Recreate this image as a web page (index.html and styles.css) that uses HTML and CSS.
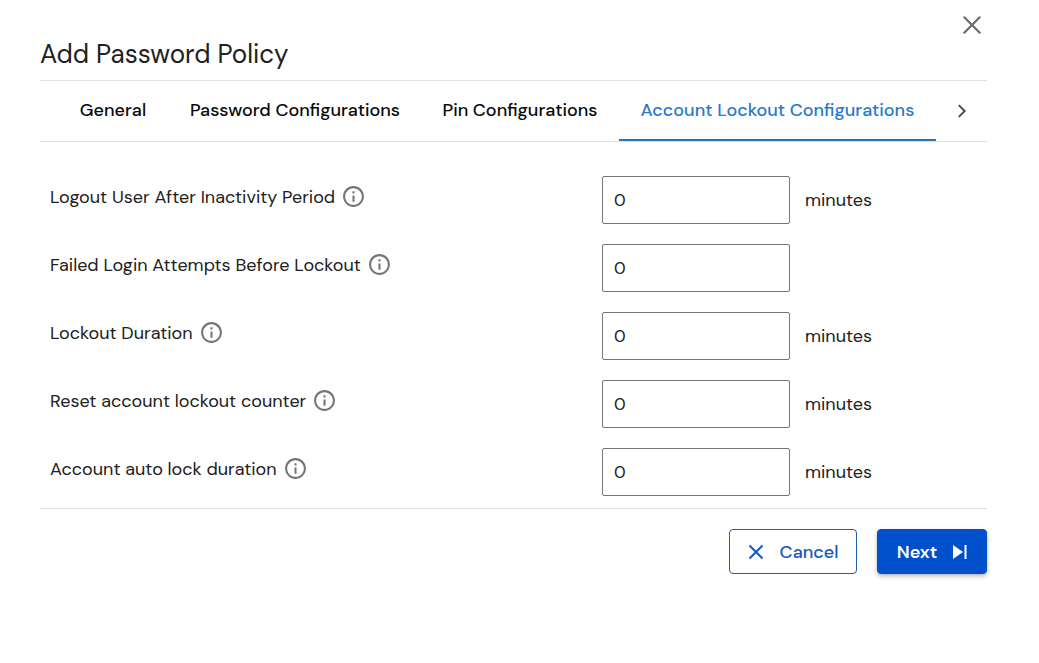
FILE: index.html
```html
<!DOCTYPE html>
<html lang="en">
<head>
<meta charset="utf-8">
<meta name="viewport" content="width=device-width, initial-scale=1">
<title>Add Password Policy</title>
<link rel="stylesheet" href="styles.css">
</head>
<body>
<svg class="sprite" aria-hidden="true">
  <symbol id="info" viewBox="0 0 24 24"><path d="M11 7h2v2h-2zm0 4h2v6h-2zm1-9C6.480 2 2 6.480 2 12s4.480 10 10 10 10-4.480 10-10S17.520 2 12 2zm0 18c-4.410 0-8-3.590-8-8s3.590-8 8-8 8 3.590 8 8-3.590 8-8 8z"/></symbol>
</svg>
<main class="dialog" role="dialog" aria-labelledby="dialog-title">
  <div class="dialog-top">
    <button class="icon-button" type="button" aria-label="Close">
      <svg class="close-icon" viewBox="0 0 20 20"><path d="M3 3l14 14M17 3l-14 14"/></svg>
    </button>
  </div>
  <h1 class="title" id="dialog-title">Add Password Policy</h1>
  <div class="tabs">
    <div class="tab-list" role="tablist">
      <button class="tab" type="button" role="tab">General</button>
      <button class="tab" type="button" role="tab">Password Configurations</button>
      <button class="tab" type="button" role="tab">Pin Configurations</button>
      <button class="tab tab-active" type="button" role="tab" aria-selected="true">Account Lockout Configurations</button>
    </div>
    <button class="icon-button tab-scroll" type="button" aria-label="Next tabs">
      <svg class="chevron" viewBox="0 0 24 24"><path d="M8.500 5.500l6.500 6.500-6.500 6.500"/></svg>
    </button>
  </div>
  <form class="form">
    <div class="row">
      <div class="row-label"><label for="inactivity">Logout User After Inactivity Period</label><svg class="info"><use href="#info"/></svg></div>
      <div class="row-field"><input class="field" id="inactivity" type="text" inputmode="numeric" value="0"><span>minutes</span></div>
    </div>
    <div class="row">
      <div class="row-label"><label for="attempts">Failed Login Attempts Before Lockout</label><svg class="info"><use href="#info"/></svg></div>
      <div class="row-field"><input class="field" id="attempts" type="text" inputmode="numeric" value="0"></div>
    </div>
    <div class="row">
      <div class="row-label"><label for="duration">Lockout Duration</label><svg class="info"><use href="#info"/></svg></div>
      <div class="row-field"><input class="field" id="duration" type="text" inputmode="numeric" value="0"><span>minutes</span></div>
    </div>
    <div class="row">
      <div class="row-label"><label for="reset">Reset account lockout counter</label><svg class="info"><use href="#info"/></svg></div>
      <div class="row-field"><input class="field" id="reset" type="text" inputmode="numeric" value="0"><span>minutes</span></div>
    </div>
    <div class="row">
      <div class="row-label"><label for="autolock">Account auto lock duration</label><svg class="info"><use href="#info"/></svg></div>
      <div class="row-field"><input class="field" id="autolock" type="text" inputmode="numeric" value="0"><span>minutes</span></div>
    </div>
  </form>
  <div class="actions">
    <button class="button button-outline" type="button">
      <svg class="cancel-icon" viewBox="0 0 16 16"><path d="M1.500 1.500l13 13M14.500 1.500l-13 13"/></svg>
      Cancel
    </button>
    <button class="button button-primary" type="button">
      Next
      <svg class="next-icon" viewBox="0 0 14 14"><path d="M0 0l10 7-10 7zM11.500 0h2v14h-2z"/></svg>
    </button>
  </div>
</main>
</body>
</html>
```
FILE: styles.css
```css
* {
  box-sizing: border-box;
}

body {
  margin: 0;
  background: #fff;
  color: #212121;
  font-family: "DM Sans", Inter, "Liberation Sans", sans-serif;
  font-size: 18px;
  line-height: 24px;
}

button,
input {
  font: inherit;
  color: inherit;
}

button {
  cursor: pointer;
}

.sprite {
  display: none;
}

.dialog {
  padding: 12px 52px 24px 40px;
}

.dialog-top {
  display: flex;
  justify-content: flex-end;
}

.icon-button {
  display: flex;
  align-items: center;
  justify-content: center;
  padding: 0;
  border: 0;
  background: none;
}

.close-icon {
  width: 22px;
  height: 26px;
  margin-right: 4px;
  fill: none;
  stroke: #6b6b6b;
  stroke-width: 2;
  stroke-linecap: round;
}

.title {
  margin: 0;
  padding-bottom: 10px;
  font-size: 26px;
  font-weight: 400;
  line-height: 32px;
}

.tabs {
  display: flex;
  height: 62px;
  padding-left: 17px;
  border-top: 1px solid #e0e0e0;
  border-bottom: 1px solid #e0e0e0;
}

.tab-list {
  display: grid;
  flex: 1;
  grid-template-columns: 112fr 252fr 198fr 317fr;
}

.tab {
  padding: 0;
  border: 0;
  border-bottom: 2px solid transparent;
  background: none;
  color: #0a0a0a;
  font-weight: 500;
  white-space: nowrap;
}

.tab-active {
  border-bottom-color: #2474bd;
  color: #2878cf;
}

.tab-scroll {
  width: 51px;
}

.chevron {
  width: 22px;
  height: 22px;
  fill: none;
  stroke: #424242;
  stroke-width: 2;
}

.form {
  display: flex;
  flex-direction: column;
  gap: 20px;
  padding: 34px 10px 12px;
  border-bottom: 1px solid #e0e0e0;
}

.row {
  display: grid;
  grid-template-columns: 552fr 375fr;
  align-items: start;
}

.row-label {
  display: flex;
  align-items: center;
  gap: 6px;
  padding-top: 8px;
}

.info {
  width: 25px;
  height: 25px;
  fill: #757575;
}

.row-field {
  display: flex;
  align-items: center;
  gap: 15px;
}

.field {
  width: 188px;
  height: 48px;
  padding: 0 11px;
  border: 1px solid #767676;
  border-radius: 2px;
  background: #fff;
  font-size: 17px;
}

.actions {
  display: flex;
  justify-content: flex-end;
  gap: 20px;
  padding-top: 20px;
}

.button {
  display: flex;
  align-items: center;
  justify-content: center;
  height: 45px;
  border: 1px solid #0052cc;
  border-radius: 4px;
  font-weight: 500;
}

.button-outline {
  gap: 16px;
  width: 128px;
  background: #fff;
  border-color: #1c5fae;
  color: #1557c0;
}

.button-primary {
  gap: 16px;
  width: 110px;
  background: #0050cc;
  box-shadow: 0 2px 4px rgba(0, 0, 0, 0.3);
  color: #fff;
  font-weight: 600;
}

.cancel-icon {
  width: 16px;
  height: 16px;
  fill: none;
  stroke: currentColor;
  stroke-width: 2;
}

.next-icon {
  width: 14px;
  height: 14px;
  fill: currentColor;
}
```
